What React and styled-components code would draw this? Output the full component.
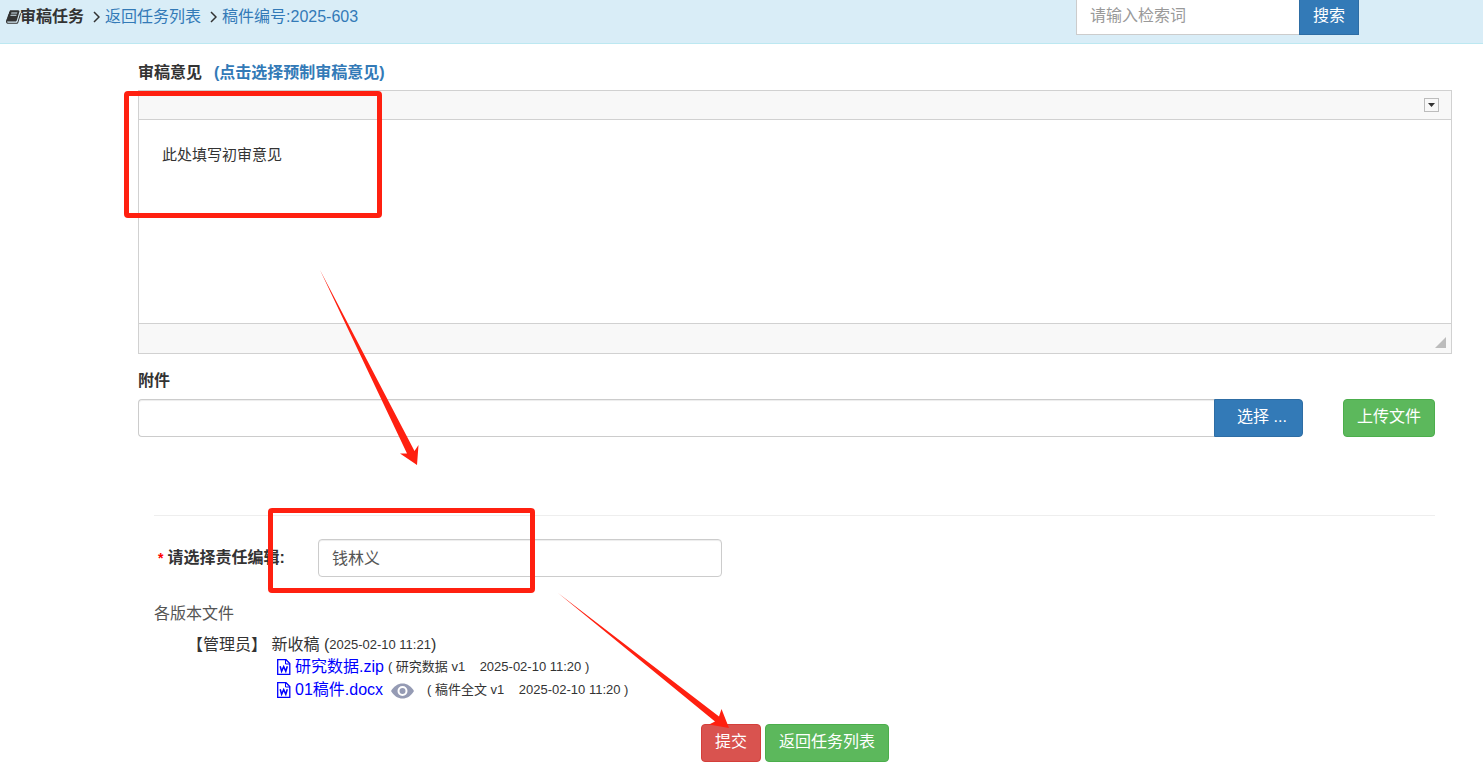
import React from 'react';
import styled, { createGlobalStyle } from 'styled-components';

const GlobalStyle = createGlobalStyle`
  * {
    box-sizing: border-box;
  }

  body {
    margin: 0;
    background: #fff;
    color: #333;
    font-family: 'Liberation Sans', 'Noto Sans CJK SC', sans-serif;
    font-size: 16px;
    line-height: 22px;
  }

  button,
  input {
    font-family: inherit;
    font-size: 16px;
    line-height: 22px;
  }
`;

const Page = styled.div`
  position: relative;
  min-height: 100vh;
  overflow: hidden;
`;

const TopBar = styled.header`
  display: flex;
  justify-content: space-between;
  height: 44px;
  padding: 0 124px 0 6px;
  background: #d9edf7;
  border-bottom: 1px solid #bce8f1;
`;

const Breadcrumb = styled.nav`
  display: flex;
  align-items: center;
  height: 34px;
  white-space: nowrap;

  svg {
    flex: none;
  }
`;

const Crumb = styled.a`
  color: #337ab7;
  text-decoration: none;
`;

const BookIcon = styled.svg`
  width: 16px;
  height: 16px;
  margin-right: -2px;
  fill: #333;
`;

const CrumbArrow = styled.svg`
  width: 7px;
  height: 12px;
  margin: 0 5px 0 9px;
  fill: none;
  stroke: #333;
  stroke-width: 1.5;
`;

const SearchForm = styled.form`
  display: flex;
  margin-top: -3px;
  height: 38px;
`;

const Button = styled.button`
  height: 38px;
  padding: 0 13px 2px;
  color: #fff;
  background: ${(props) => props.$bg};
  border: 1px solid ${(props) => props.$border};
  border-radius: ${(props) => props.$radius || '4px'};
  white-space: nowrap;
  cursor: pointer;
`;

const SearchButton = styled(Button)`
  padding-bottom: 0;
`;

const TextInput = styled.input`
  height: 38px;
  min-width: 0;
  padding: 0 13px 2px;
  color: #555;
  background: #fff;
  border: 1px solid #ccc;
  border-radius: ${(props) => props.$radius || '4px'};
  box-shadow: inset 0 1px 1px rgba(0, 0, 0, 0.075);
  outline: none;

  &::placeholder {
    color: #999;
  }
`;

const SearchInput = styled(TextInput)`
  width: 223px;
  border-right: 0;
  padding-bottom: 0;
`;

const Form = styled.form`
  padding: 18px 31px 0 138px;
`;

const FieldTitle = styled.div`
  display: flex;
  gap: 12px;
  font-weight: bold;
`;

const Editor = styled.div`
  margin-top: 6px;
  border: 1px solid #d1d1d1;
`;

const EditorToolbar = styled.div`
  display: flex;
  justify-content: flex-end;
  align-items: center;
  height: 29px;
  padding-right: 12px;
  background: #f8f8f8;
  border-bottom: 1px solid #d1d1d1;
`;

const CollapseButton = styled.button`
  display: flex;
  align-items: center;
  justify-content: center;
  width: 15px;
  height: 14px;
  padding: 0;
  background: #f8f8f8;
  border: 1px solid #bcbcbc;
`;

const EditorBody = styled.textarea`
  display: block;
  width: 100%;
  height: 203px;
  padding: 24px 23px;
  border: 0;
  outline: none;
  resize: none;
  color: #333;
  font-family: inherit;
  font-size: 15px;
  line-height: 22px;
`;

const EditorFooter = styled.div`
  display: flex;
  justify-content: flex-end;
  align-items: flex-end;
  height: 30px;
  padding: 0 5px 5px 0;
  background: #f8f8f8;
  border-top: 1px solid #d1d1d1;
`;

const AttachLabel = styled.label`
  display: block;
  margin-top: 16px;
  font-weight: bold;
`;

const FileRow = styled.div`
  display: flex;
  margin: 7px 17px 0 0;
`;

const FileInput = styled(TextInput)`
  flex: 1;
  border-right: 0;
`;

const PickButton = styled(Button)`
  width: 89px;
  margin-right: 40px;
  padding-left: 20px;
`;

const Details = styled.section`
  margin: 78px 17px 0 16px;
  border-top: 1px solid #eee;
`;

const EditorRow = styled.div`
  display: flex;
  align-items: center;
  margin-top: 23px;

  label {
    width: 164px;
    padding-left: 4px;
    font-weight: bold;
  }
`;

const Required = styled.span`
  margin-right: 4px;
  color: #f00;
  font-size: 14px;
`;

const EditorName = styled(TextInput)`
  width: 404px;
`;

const Files = styled.div`
  margin-top: 26px;
`;

const FilesTitle = styled.div`
  color: #555;
`;

const Version = styled.div`
  display: flex;
  align-items: center;
  margin: 9px 0 0 33px;
`;

const Small = styled.span`
  font-size: 13px;
  white-space: pre;
`;

const FileItem = styled.div`
  display: flex;
  align-items: center;
  height: 23px;
  margin-left: 122px;
`;

const FileList = styled.div`
  margin-top: -1px;
`;

const FileLink = styled.a`
  display: flex;
  align-items: center;
  gap: 3px;
  margin-right: 4px;
  color: #00f;
  text-decoration: none;
`;

const WordIcon = styled.svg`
  width: 16px;
  height: 16px;
  fill: none;
  stroke: #00f;
`;

const EyeIcon = styled.svg`
  width: 23px;
  height: 16px;
  margin: 2px 13px 0 4px;
`;

const Actions = styled.div`
  display: flex;
  justify-content: center;
  gap: 4px;
  margin-top: 23px;
`;

const Highlight = styled.div`
  position: absolute;
  top: ${(props) => props.$top}px;
  left: ${(props) => props.$left}px;
  width: ${(props) => props.$width}px;
  height: ${(props) => props.$height}px;
  border: 5px solid #ff2010;
  border-radius: 4px;
  pointer-events: none;
`;

const Arrows = styled.svg`
  position: absolute;
  top: 0;
  left: 0;
  fill: #ff2010;
  pointer-events: none;
`;

const files = [
  { name: '研究数据.zip', info: '( 研究数据 v1    2025-02-10 11:20 )' },
  { name: '01稿件.docx', info: '( 稿件全文 v1    2025-02-10 11:20 )', preview: true },
];

const Book = () => (
  <BookIcon viewBox="0 0 1792 1792">
    <path d="M1639 478q40 57 18 129l-275 906q-19 64-76.5 107.5t-122.5 43.5h-923q-77 0-148.5-53.5t-99.5-131.5q-24-67-2-127 0-4 3-27t4-37q1-8-3-21.5t-3-19.5q2-11 8-21t16.5-23.5 16.5-23.5q23-38 45-91.5t30-91.5q3-10 .5-30t-.5-28q3-11 17-28t17-23q21-36 42-92t25-90q1-9-2.5-32t.5-28q4-13 22-30.5t22-22.5q19-26 42.5-84.5t27.5-96.5q1-8-3-25.5t-2-26.5q2-8 9-18t18-23 17-21q8-12 16.5-30.5t15-35 16-36 19.5-32 26.5-23.5 36-11.5 47.5 5.5l-1 3q38-9 51-9h761q74 0 114 56t18 130l-274 906q-36 119-71.5 153.5t-128.5 34.5h-869q-27 0-38 15-11 16-1 43 24 70 144 70h923q29 0 56-15.5t35-41.5l300-987q7-22 5-57 38 15 59 43zm-1064 2q-4 13 2 22.5t20 9.5h608q13 0 25.5-9.5t16.5-22.5l21-64q4-13-2-22.5t-20-9.5h-608q-13 0-25.5 9.5t-16.5 22.5zm-83 256q-4 13 2 22.5t20 9.5h608q13 0 25.5-9.5t16.5-22.5l21-64q4-13-2-22.5t-20-9.5h-608q-13 0-25.5 9.5t-16.5 22.5z" />
  </BookIcon>
);

const Word = () => (
  <WordIcon viewBox="0 0 16 16">
    <path strokeWidth="1.3" d="M1.700 .7H10L13.800 4.500V15.300H1.700z" />
    <path d="M9.500 1v4H14" />
    <path strokeWidth="1.500" d="M4.200 7.200L5.600 12.300L7.700 7.600L9.800 12.300L11.300 7.200" />
  </WordIcon>
);

const Arrow = () => (
  <CrumbArrow viewBox="0 0 7 12">
    <path d="M1 1l5 5-5 5" />
  </CrumbArrow>
);

const Eye = () => (
  <EyeIcon viewBox="0 0 23 16">
    <path
      fill="#959bb4"
      d="M0 8C3 3 7 .5 11.500 .5S20 3 23 8c-3 5-7 7.500-11.500 7.500S3 13 0 8z"
    />
    <circle cx="11.500" cy="8" r="4" fill="#959bb4" stroke="#fff" strokeWidth="2" />
  </EyeIcon>
);

const App = () => {
  return (
    <Page>
      <GlobalStyle />
      <TopBar>
        <Breadcrumb>
          <Book />
          <strong>审稿任务</strong>
          <Arrow />
          <Crumb href="#list">返回任务列表</Crumb>
          <Arrow />
          <Crumb href="#paper">稿件编号:2025-603</Crumb>
        </Breadcrumb>
        <SearchForm>
          <SearchInput $radius="0" placeholder="请输入检索词" aria-label="请输入检索词" />
          <SearchButton type="button" $bg="#337ab7" $border="#2e6da4" $radius="0">
            搜索
          </SearchButton>
        </SearchForm>
      </TopBar>

      <Form>
        <FieldTitle>
          <label htmlFor="opinion">审稿意见</label>
          <Crumb href="#preset">(点击选择预制审稿意见)</Crumb>
        </FieldTitle>
        <Editor>
          <EditorToolbar>
            <CollapseButton type="button" aria-label="工具栏">
              <svg width="7" height="4" viewBox="0 0 7 4">
                <path d="M0 0h7L3.500 4z" fill="#333" />
              </svg>
            </CollapseButton>
          </EditorToolbar>
          <EditorBody id="opinion" defaultValue="此处填写初审意见" />
          <EditorFooter>
            <svg width="11" height="11" viewBox="0 0 11 11">
              <path d="M11 0v11H0z" fill="#bcbcbc" />
            </svg>
          </EditorFooter>
        </Editor>

        <AttachLabel htmlFor="attachment">附件</AttachLabel>
        <FileRow>
          <FileInput id="attachment" $radius="4px 0 0 4px" />
          <PickButton type="button" $bg="#337ab7" $border="#2e6da4" $radius="0 4px 4px 0">
            选择 ...
          </PickButton>
          <Button type="button" $bg="#5cb85c" $border="#4cae4c">
            上传文件
          </Button>
        </FileRow>

        <Details>
          <EditorRow>
            <label htmlFor="editor">
              <Required>*</Required>
              请选择责任编辑:
            </label>
            <EditorName id="editor" defaultValue="钱林义" />
          </EditorRow>
          <Files>
            <FilesTitle>各版本文件</FilesTitle>
            <Version>
              【管理员】&nbsp;新收稿&nbsp;(<Small>2025-02-10 11:21</Small>)
            </Version>
            <FileList>
              {files.map((file) => (
                <FileItem key={file.name}>
                  <FileLink href="#file">
                    <Word />
                    {file.name}
                  </FileLink>
                  {file.preview && <Eye />}
                  <Small>{file.info}</Small>
                </FileItem>
              ))}
            </FileList>
          </Files>
        </Details>

        <Actions>
          <Button type="button" $bg="#d9534f" $border="#d43f3a">
            提交
          </Button>
          <Button type="button" $bg="#5cb85c" $border="#4cae4c">
            返回任务列表
          </Button>
        </Actions>
      </Form>

      <Highlight $top={91} $left={124} $width={258} $height={127} />
      <Highlight $top={508} $left={268} $width={267} $height={85} />
      <Arrows width="760" height="769" viewBox="0 0 760 769">
        <path d="M320 270L414.500 451L418.500 445L417 465L400 453.500L407 453.500z" />
        <path d="M558 593L719 716.500L721.500 709L729 728L709 724.500L715 721.500z" />
      </Arrows>
    </Page>
  );
};

export default App;
